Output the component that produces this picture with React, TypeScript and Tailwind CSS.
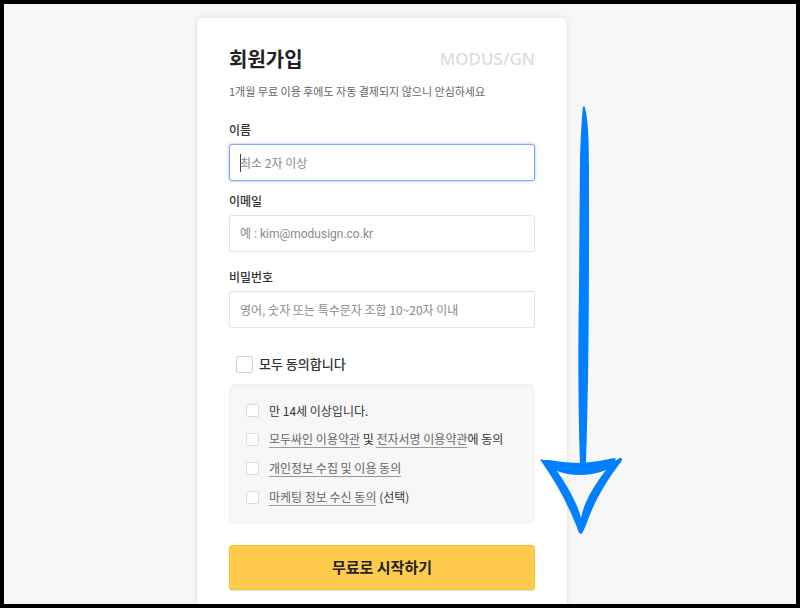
import type { ReactNode } from "react";

interface FieldProps {
	id: string;
	label: string;
	placeholder: string;
	type?: string;
	active?: boolean;
	className?: string;
	inputClassName?: string;
}

function Field({
	id,
	label,
	placeholder,
	type = "text",
	active = false,
	className = "",
	inputClassName = "pb-px",
}: FieldProps) {
	const border = active
		? "border-[#7eabf9] shadow-[0_0_3px_#8cb3fa]"
		: "border-[#e5e5e5] shadow-[0_0_1px_#e5e5e5]";

	return (
		<div className={className}>
			<label
				htmlFor={id}
				className="block text-[12px] leading-4 font-medium text-[#333]"
			>
				{label}
			</label>
			<div className="relative mt-1.5">
				<input
					id={id}
					type={type}
					placeholder={placeholder}
					className={`block h-[37px] w-full rounded-[3px] border bg-white px-2.5 text-[12px] text-[#333] outline-none placeholder:text-[#8a8a8a] ${border} ${inputClassName}`}
				/>
				{active && (
					<span className="absolute top-2.5 left-[11px] h-[18px] w-px bg-[#444]" />
				)}
			</div>
		</div>
	);
}

interface AgreementProps {
	id: string;
	children: ReactNode;
}

function Agreement({ id, children }: AgreementProps) {
	return (
		<li className="flex items-center gap-2.5">
			<input
				id={id}
				type="checkbox"
				className="size-[13px] shrink-0 appearance-none rounded-[2px] border border-[#dcdcdc] bg-white checked:bg-[#fecb4d]"
			/>
			<label
				htmlFor={id}
				className="text-[12px] leading-[17px] font-normal text-[#333]"
			>
				{children}
			</label>
		</li>
	);
}

function TermsLink({ children }: { children: ReactNode }) {
	return (
		<a
			href="#terms"
			className="inline-block border-b border-[#999] leading-4 text-[#666]"
		>
			{children}
		</a>
	);
}

function Logo() {
	return (
		<div className="font-['Noto_Sans'] text-[17px] leading-6 font-medium text-[#dcdcdc]">
			MODUS/GN
		</div>
	);
}

function DownArrow() {
	return (
		<svg
			viewBox="0 0 84 430"
			className="pointer-events-none absolute top-[88px] left-full -ml-[27px] h-[430px] w-[84px]"
			aria-hidden="true"
		>
			<path
				fill="#0080ff"
				d="M43 1C44 0 45 1 45 2C48 12 49 34 49 60L49 140C49 220 48 300 46 359L40 359C38 300 38 240 39 180L40 50C41 24 42 8 43 1Z"
			/>
			<path
				fill="#0080ff"
				fillRule="evenodd"
				d="M1 355C0 353 1 352 3 354L9 354C20 356 31 357 42 357C54 356 65 354 74 352L76 353L75 355L80 352C83 352 82 354 81 356C66 375 54 396 46 419C44 424 42 428 41 428C39 428 38 424 36 419C27 396 15 375 1 355ZM17 365C26 378 37 396 41 412C44 396 55 378 66 364C51 370 32 371 17 365Z"
			/>
		</svg>
	);
}

export default function App() {
	return (
		<div className="flex min-h-screen flex-col items-center border-4 border-black bg-[#f7f7f7] pt-3.5 pr-9 font-['Noto_Sans_CJK_KR',sans-serif]">
			<main className="relative w-full max-w-[370px] grow rounded-t-[5px] bg-white px-8 pt-[27px] pb-3 shadow-[0_0_5px_rgba(0,0,0,0.12)]">
				<header className="flex items-center justify-between">
					<h1 className="text-[20px] leading-7 font-bold text-[#222]">
						회원가입
					</h1>
					<Logo />
				</header>
				<p className="mt-2.5 text-[11px] leading-4 text-[#666]">
					1개월 무료 이용 후에도 자동 결제되지 않으니 안심하세요
				</p>

				<form>
					<Field
						id="name"
						label="이름"
						placeholder="최소 2자 이상"
						active
						className="mt-[23px]"
					/>
					<Field
						id="email"
						label="이메일"
						placeholder="예 : kim@modusign.co.kr"
						type="email"
						className="mt-3"
						inputClassName="font-[Roboto,'Noto_Sans_CJK_KR',sans-serif]"
					/>
					<Field
						id="password"
						label="비밀번호"
						placeholder="영어, 숫자 또는 특수문자 조합 10~20자 이내"
						type="password"
						className="mt-[17px]"
					/>

					<div className="mt-[26px] flex items-center gap-1.5 pl-[7px]">
						<input
							id="agree-all"
							type="checkbox"
							className="size-[17px] appearance-none rounded-[2px] border border-[#d2d2d2] bg-white checked:bg-[#fecb4d]"
						/>
						<label
							htmlFor="agree-all"
							className="text-[13px] leading-5 font-medium text-[#333]"
						>
							모두 동의합니다
						</label>
					</div>

					<ul className="mt-2.5 flex flex-col gap-[11px] rounded-md border border-[#f1f1f1] bg-[#f7f7f7] px-4 py-[17px]">
						<Agreement id="age">만 14세 이상입니다.</Agreement>
						<Agreement id="terms">
							<TermsLink>모두싸인 이용약관</TermsLink> 및{" "}
							<TermsLink>전자서명 이용약관</TermsLink>에 동의
						</Agreement>
						<Agreement id="privacy">
							<TermsLink>개인정보 수집 및 이용 동의</TermsLink>
						</Agreement>
						<Agreement id="marketing">
							<TermsLink>마케팅 정보 수신 동의</TermsLink> (선택)
						</Agreement>
					</ul>

					<button
						type="button"
						className="mt-[21px] block h-[45px] w-full rounded-[3px] border border-[#fdc12f] bg-[#fecb4d] text-[15px] font-bold text-[#222] shadow-[0_1px_1px_rgba(0,0,0,0.12)]"
					>
						무료로 시작하기
					</button>
				</form>
				<DownArrow />
			</main>
		</div>
	);
}
